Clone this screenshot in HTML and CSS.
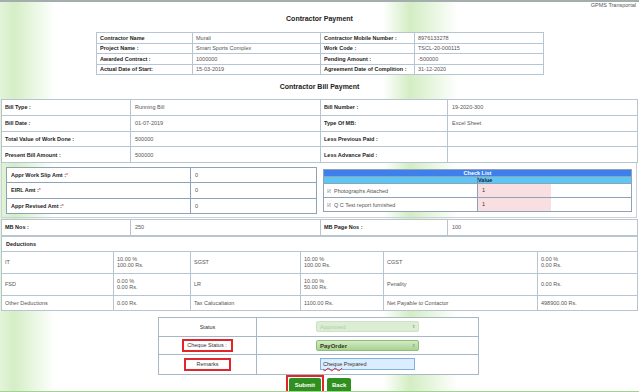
FILE: index.html
```html
<!DOCTYPE html>
<html lang="en">
<head>
    <meta charset="UTF-8">
    <meta name="viewport" content="width=device-width, initial-scale=1.0">
    <title>Contractor Payment</title>
    <link rel="stylesheet" href="styles.css">
</head>
<body>
    <div class="topbar">GPMS Transportal</div>

    <h2 class="page-title">Contractor Payment</h2>

    <table class="info-table">
        <colgroup><col class="ic1"><col class="ic2"><col class="ic3"><col class="ic4"></colgroup>
        <tr><th>Contractor Name</th><td>Murali</td><th>Contractor Mobile Number :</th><td>8976133278</td></tr>
        <tr><th>Project Name :</th><td>Smart Sports Complex</td><th>Work Code :</th><td>TSCL-20-000115</td></tr>
        <tr><th>Awarded Contract :</th><td>1000000</td><th>Pending Amount :</th><td>-500000</td></tr>
        <tr><th>Actual Date of Start:</th><td>15-03-2019</td><th>Agreement Date of Complition :</th><td>31-12-2020</td></tr>
    </table>

    <h2 class="page-title sub">Contractor Bill Payment</h2>

    <table class="bill-table">
        <colgroup><col class="bc1"><col class="bc2"><col class="bc3"><col class="bc4"></colgroup>
        <tr><th>Bill Type :</th><td>Running Bill</td><th>Bill Number :</th><td>19-2020-300</td></tr>
        <tr><th>Bill Date :</th><td>01-07-2019</td><th>Type Of MB:</th><td>Excel Sheet</td></tr>
        <tr><th>Total Value of Work Done :</th><td>500000</td><th>Less Previous Paid :</th><td></td></tr>
        <tr><th>Present Bill Amount :</th><td>500000</td><th>Less Advance Paid :</th><td></td></tr>
    </table>

    <div class="amount-box">
        <table class="amt-table">
            <colgroup><col class="ac1"><col class="ac2"></colgroup>
            <tr><th>Appr Work Slip Amt :<span class="req">*</span></th><td>0</td></tr>
            <tr><th>EIRL Amt :<span class="req">*</span></th><td>0</td></tr>
            <tr><th>Appr Revised Amt :<span class="req">*</span></th><td>0</td></tr>
        </table>

        <table class="check-table">
            <colgroup><col class="kc1"><col class="kc2"></colgroup>
            <tr class="check-head"><th colspan="2">Check List</th></tr>
            <tr class="check-sub"><th></th><th class="value-col">Value</th></tr>
            <tr>
                <td><span class="tick"><svg width="4" height="4" viewBox="0 0 4 4"><rect x="0.25" y="0.25" width="3.5" height="3.5" fill="#f2f2f2" stroke="#c4c4c4" stroke-width="0.5"/><path d="M0.8 2 L1.6 2.9 L3.2 0.9" fill="none" stroke="#8a8a8a" stroke-width="0.6"/></svg></span>Photographs Attached</td>
                <td class="value-col"><span class="val-input">1</span></td>
            </tr>
            <tr>
                <td><span class="tick"><svg width="4" height="4" viewBox="0 0 4 4"><rect x="0.25" y="0.25" width="3.5" height="3.5" fill="#f2f2f2" stroke="#c4c4c4" stroke-width="0.5"/><path d="M0.8 2 L1.6 2.9 L3.2 0.9" fill="none" stroke="#8a8a8a" stroke-width="0.6"/></svg></span>Q C Test report furnished</td>
                <td class="value-col"><span class="val-input">1</span></td>
            </tr>
        </table>
    </div>

    <table class="bill-table mb-table">
        <colgroup><col class="bc1"><col class="bc2"><col class="bc3"><col class="bc4"></colgroup>
        <tr><th>MB Nos :</th><td>250</td><th>MB Page Nos :</th><td>100</td></tr>
    </table>

    <table class="ded-table">
        <colgroup><col class="dc1"><col class="dc2"><col class="dc3"><col class="dc4"><col class="dc5"><col class="dc6"></colgroup>
        <tr class="ded-head"><th colspan="6">Deductions</th></tr>
        <tr class="tall"><td>IT</td><td>10.00 %<br>100.00 Rs.</td><td>SGST</td><td>10.00 %<br>100.00 Rs.</td><td>CGST</td><td>0.00 %<br>0.00 Rs.</td></tr>
        <tr class="tall"><td>FSD</td><td>0.00 %<br>0.00 Rs.</td><td>LR</td><td>10.00 %<br>50.00 Rs.</td><td>Penality</td><td>0.00 Rs.</td></tr>
        <tr><td>Other Deductions</td><td>0.00 Rs.</td><td>Tax Calucaltaion</td><td>1100.00 Rs.</td><td>Net Payable to Contactor</td><td>498900.00 Rs.</td></tr>
    </table>

    <table class="form-table">
        <colgroup><col class="fc1"><col class="fc2"></colgroup>
        <tr class="r1">
            <td class="form-label">Status</td>
            <td><div class="select disabled">Approved<span class="arrows">&#x21D5;</span></div></td>
        </tr>
        <tr class="r2">
            <td class="form-label"><span class="mark wide">Cheque Status :</span></td>
            <td><div class="select active">PayOrder<span class="arrows">&#x21D5;</span></div></td>
        </tr>
        <tr class="r3">
            <td class="form-label"><span class="mark">Remarks</span></td>
            <td><div class="text-input"><span class="spell">Cheque</span> Prepared</div></td>
        </tr>
    </table>

    <div class="actions">
        <span class="submit-wrap"><button class="btn">Submit</button></span>
        <button class="btn">Back</button>
    </div>
</body>
</html>
```

FILE: styles.css
```css
:root {
    --border-color: #b7c4d1;
    --border-dark: #8fa2b6;
    --label-color: #222;
    --value-color: #555;
    --green: #2f9020;
    --mark-red: #e0262b;
}

* {
    margin: 0;
    padding: 0;
    box-sizing: border-box;
}

body {
    font-family: 'Liberation Sans', Arial, sans-serif;
    font-size: 5.5px;
    color: var(--value-color);
    height: 392px;
    background:
        linear-gradient(90deg, rgba(255,255,255,0) 383px, #d3edc3 410px, rgba(255,255,255,0) 458px),
        linear-gradient(90deg, #e3f4d9 0, #d5eec6 14px, rgba(255,255,255,0) 55px),
        #fff;
    border-bottom: 1px solid #9fd68f;
}

.topbar {
    border-top: 2px solid #a3adae;
    text-align: right;
    padding-right: 3px;
    height: 8px;
    line-height: 7px;
    color: #555;
}

.page-title {
    font-size: 7px;
    font-weight: bold;
    color: #222;
    text-align: center;
    line-height: 8px;
    margin-top: 7px;
}

.page-title.sub {
    margin-top: 8px;
}

table {
    border-collapse: collapse;
    table-layout: fixed;
    background: #fff;
}

th, td {
    text-align: left;
    vertical-align: middle;
    padding: 0 3px;
    border: 1px solid var(--border-color);
}

th {
    font-weight: bold;
    color: var(--label-color);
}

td {
    color: var(--value-color);
}

/* contractor info */
.info-table {
    width: 447px;
    margin: 9px 0 0 96px;
    border: 1px solid var(--border-dark);
}

.info-table tr {
    height: 10.5px;
}

.ic1 { width: 96px; }
.ic2 { width: 128px; }
.ic3 { width: 94px; }
.ic4 { width: 129px; }

/* bill details */
.bill-table {
    width: 636px;
    margin: 8px 0 0 1px;
    border: 1px solid var(--border-dark);
}

.bill-table tr {
    height: 15.75px;
}

.bill-table td {
    padding-left: 4px;
}

.bc1 { width: 129px; }
.bc2 { width: 190px; }
.bc3 { width: 127px; }
.bc4 { width: 190px; }

.amount-box {
    width: 636px;
    margin: 0 0 0 1px;
    padding: 4px 4px 3px;
    border: 1px solid #c9d2da;
    border-top: none;
    display: flex;
    justify-content: space-between;
    align-items: flex-start;
}

.amt-table {
    width: 310px;
    border: 1px solid var(--border-dark);
}

.amt-table th, .amt-table td {
    border-color: var(--border-dark);
    height: 15.3px;
    padding-left: 4px;
}

.ac1 { width: 184px; }
.ac2 { width: 126px; }

.req {
    color: #e23;
    font-weight: normal;
}

.check-table {
    width: 308px;
    margin-top: 2px;
    border: 1px solid var(--border-dark);
}

.kc1 { width: 154px; }
.kc2 { width: 154px; }

.check-table th, .check-table td {
    border-color: var(--border-dark);
}

.check-head th {
    background: #3f7fec;
    color: #fff;
    text-align: center;
    height: 7px;
    line-height: 6px;
}

.check-sub th {
    background: #5cc6f7;
    color: #1b2a3a;
    height: 7px;
    line-height: 6px;
    border-left-color: var(--border-dark);
    border-right-color: var(--border-dark);
}

.check-sub th:first-child {
    border-right: none;
}

.check-table td {
    height: 14px;
    padding-left: 2px;
}

.check-table .value-col {
    border-left: 1px solid #6d85a0;
    padding: 0;
}

.tick {
    display: inline-block;
    vertical-align: -0.5px;
    margin-right: 3px;
    margin-left: 1px;
}

.tick svg {
    display: block;
}

.val-input {
    display: block;
    width: 73px;
    height: 13px;
    line-height: 13px;
    background: #f9dfe2;
    padding-left: 4px;
    color: #333;
}

.mb-table {
    margin-top: 1px;
}

.mb-table tr {
    height: 16px;
}

/* deductions */
.ded-table {
    width: 636px;
    margin-left: 1px;
    border: 1px solid var(--border-dark);
}

.ded-head th {
    height: 15px;
    padding-left: 4px;
}

.ded-table td {
    height: 15px;
    padding-left: 3px;
    line-height: 6.6px;
}

.ded-table tr.tall td {
    height: 22px;
}

.dc1 { width: 112px; }
.dc2 { width: 77px; }
.dc3 { width: 110px; }
.dc4 { width: 83px; }
.dc5 { width: 154px; }
.dc6 { width: 100px; }

/* status form */
.form-table {
    width: 320px;
    margin: 6px 0 0 158px;
    border: 1px solid #9fb0c2;
}

.fc1 { width: 98px; }
.fc2 { width: 222px; }

.form-table td {
    border-color: #a8b7c6;
    padding: 0;
}

.form-table .r1 td { height: 19px; }
.form-table .r2 td { height: 18px; }
.form-table .r3 td { height: 20px; }

.form-label {
    text-align: center;
    color: #333;
}

.mark {
    display: inline-block;
    border: 2px solid var(--mark-red);
    padding: 1px 10px;
    line-height: 7px;
}

.mark.wide {
    padding: 1px 4px 1px 3px;
}

.select {
    position: relative;
    width: 103px;
    height: 11px;
    line-height: 10px;
    margin-left: 59px;
    padding-left: 3px;
    border-radius: 2px;
    font-size: 6px;
}

.select.disabled {
    background: #dbeed3;
    border: 1px solid #cfe2c6;
    color: #b3cbab;
}

.select.active {
    background: linear-gradient(#d3eac4, #a9d28f);
    border: 1px solid #8fbf7a;
    color: #2b3a24;
    font-weight: bold;
}

.arrows {
    position: absolute;
    right: 3px;
    top: 0;
    font-size: 4px;
    font-weight: normal;
    color: #7b8c74;
}

.text-input {
    width: 95px;
    height: 12px;
    line-height: 10px;
    margin-left: 63px;
    padding-left: 2px;
    background: #dcedff;
    border: 1px solid #7fb0e0;
    color: #333;
}

.spell {
    text-decoration: underline wavy #e0282c;
    text-decoration-thickness: 0.5px;
}

.actions {
    display: flex;
    justify-content: center;
    align-items: flex-end;
    gap: 3px;
    margin-top: 0;
    padding-right: 2px;
}

.submit-wrap {
    border: 2px solid var(--mark-red);
    border-bottom: none;
    padding: 1px 1px 0;
}

.btn {
    font-family: 'Liberation Sans', Arial, sans-serif;
    font-size: 6px;
    font-weight: bold;
    color: #fff;
    background: var(--green);
    border: none;
    border-radius: 2px 2px 0 0;
    height: 14px;
    padding: 0 6px;
}

.actions > .btn {
    padding: 0 5px;
}
```
